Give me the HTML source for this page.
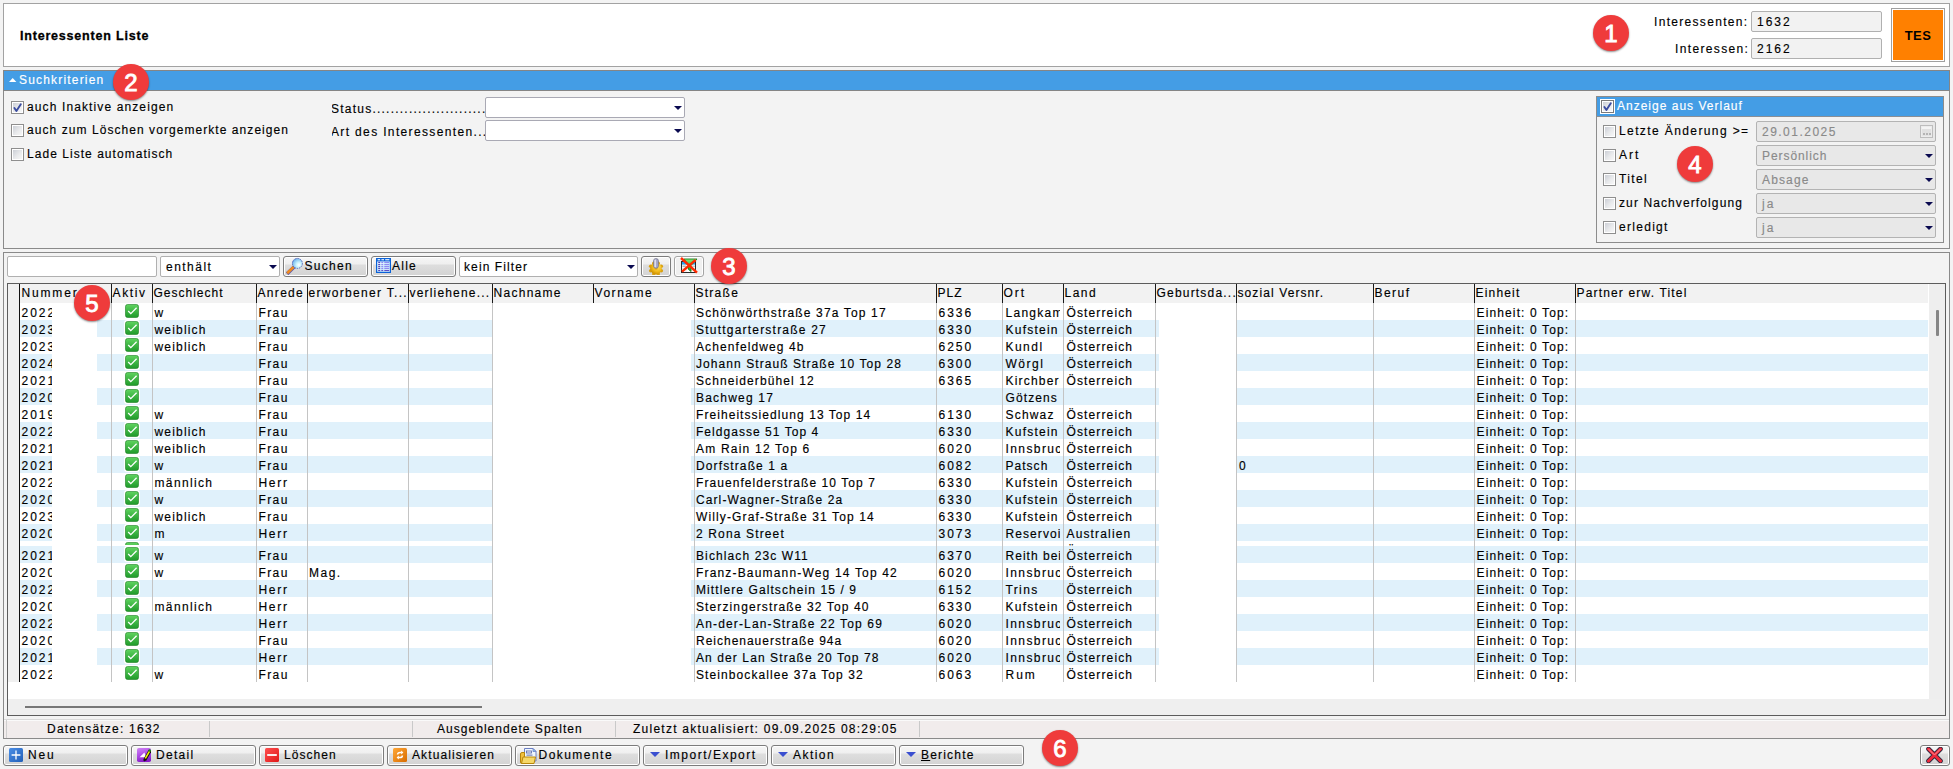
<!DOCTYPE html><html><head><meta charset="utf-8"><style>
html,body{margin:0;padding:0;}
body{width:1953px;height:769px;overflow:hidden;position:relative;background:#f3f3f3;font-family:"Liberation Sans",sans-serif;}
.a{position:absolute;box-sizing:border-box;}
.t{position:absolute;white-space:nowrap;font-size:12px;line-height:14px;letter-spacing:1.04px;color:#000;-webkit-text-stroke:0.15px currentColor;}
.badge{position:absolute;width:36px;height:36px;border-radius:50%;background:#ef3b3b;color:#fff;font:normal 24px/38px "Liberation Sans",sans-serif;-webkit-text-stroke:0.9px #fff;text-align:center;box-shadow:0 1px 2px rgba(0,0,0,0.45);z-index:50;}
.cb{position:absolute;box-sizing:border-box;border:1px solid #8e8e8e;background:linear-gradient(135deg,#c6cad2 0%,#e9eaec 55%,#fafafa 100%);box-shadow:inset 0 0 0 1px #fff;}
.btn{position:absolute;box-sizing:border-box;border:1px solid #7c7c7c;border-radius:3px;background:linear-gradient(#f6f6f6 0%,#efefef 38%,#dedede 41%,#d3d3d3 100%);box-shadow:inset 0 0 0 1px #fff;}
.cmb{position:absolute;box-sizing:border-box;border:1px solid #a9a9b4;border-radius:2px;background:#fff;}
.clip{position:absolute;overflow:hidden;white-space:nowrap;}
</style></head><body>

<div class="a" style="left:3px;top:3px;width:1947px;height:64px;border:1px solid #a2a2a2;background:#fff;"></div>
<div class="t" style="left:20px;top:29px;letter-spacing:1.103px;font-weight:bold;font-size:12.5px;letter-spacing:0.8px;-webkit-text-stroke:0.3px #000;">Interessenten Liste</div>
<div class="t" style="left:1654px;top:15px;letter-spacing:1.310px;">Interessenten:</div>
<div class="t" style="left:1675px;top:42px;letter-spacing:1.352px;">Interessen:</div>
<div class="a" style="left:1751px;top:11px;width:131px;height:21px;border:1px solid #b0b0b0;border-radius:2px;background:#f2f2f2;"></div>
<div class="a" style="left:1751px;top:38px;width:131px;height:21px;border:1px solid #b0b0b0;border-radius:2px;background:#f2f2f2;"></div>
<div class="t" style="left:1757px;top:15px;letter-spacing:1.986px;">1632</div>
<div class="t" style="left:1757px;top:42px;letter-spacing:1.986px;">2162</div>
<div class="a" style="left:1891px;top:8px;width:54px;height:54px;border:1px solid #a0a0a0;background:#fff;padding:1px;"></div>
<div class="a" style="left:1893px;top:10px;width:50px;height:50px;background:#ff8000;"></div>
<div class="a" style="left:1893px;top:10px;width:50px;height:50px;font:bold 13px/51px 'Liberation Sans';text-align:center;color:#000;letter-spacing:0.4px;">TES</div>
<div class="badge" style="left:1593.0px;top:14.5px;">1</div>
<div class="a" style="left:3px;top:70px;width:1947px;height:21px;border:1px solid #858585;background:#449de5;"></div>
<svg class="a" style="left:8px;top:77px;" width="10" height="6" viewBox="0 0 10 6"><polygon points="1,5 8.4,5 4.7,1" fill="#fff"/></svg>
<div class="t" style="left:19px;top:73px;letter-spacing:1.179px;color:#fff;">Suchkriterien</div>
<div class="badge" style="left:113.0px;top:64.0px;">2</div>
<div class="a" style="left:3px;top:91px;width:1947px;height:158px;border:1px solid #8a8a8a;border-top:none;background:#f3f3f3;"></div>
<div class="cb" style="left:11px;top:101px;width:13px;height:13px;"><svg width="11" height="11" viewBox="0 0 11 11" style="position:absolute;left:0px;top:0px"><path d="M2.4 6 L4.4 9 L8.8 2.2" stroke="#3a4ca0" stroke-width="1.9" fill="none" stroke-linecap="round" stroke-linejoin="round"/></svg></div>
<div class="cb" style="left:11px;top:124px;width:13px;height:13px;"></div>
<div class="cb" style="left:11px;top:148px;width:13px;height:13px;"></div>
<div class="t" style="left:27px;top:100px;letter-spacing:1.115px;">auch Inaktive anzeigen</div>
<div class="t" style="left:27px;top:123px;letter-spacing:1.061px;">auch zum Löschen vorgemerkte anzeigen</div>
<div class="t" style="left:27px;top:146.5px;letter-spacing:1.039px;">Lade Liste automatisch</div>
<div class="clip" style="left:332px;top:100px;width:153px;height:17px;"><div class="t" style="left:-1px;top:1.5px;letter-spacing:1.228px;">Status..............................</div></div>
<div class="clip" style="left:332px;top:120px;width:153px;height:20px;"><div class="t" style="left:-1px;top:5px;letter-spacing:1.352px;">Art des Interessenten...</div></div>
<div class="cmb" style="left:485px;top:97px;width:200px;height:21px;"></div>
<div class="a" style="left:673.5px;top:106px;width:0;height:0;border-left:4.0px solid transparent;border-right:4.0px solid transparent;border-top:4px solid #0a0a50;"></div>
<div class="cmb" style="left:485px;top:120px;width:200px;height:21px;"></div>
<div class="a" style="left:673.5px;top:129px;width:0;height:0;border-left:4.0px solid transparent;border-right:4.0px solid transparent;border-top:4px solid #0a0a50;"></div>
<div class="a" style="left:1596px;top:96px;width:348px;height:147px;border:1px solid #8c8c8c;background:#f3f3f3;"></div>
<div class="a" style="left:1597px;top:97px;width:346px;height:19px;background:#449de5;"></div>
<div class="a" style="left:1597px;top:116px;width:346px;height:1px;background:#8a8f96;"></div>
<div class="cb" style="left:1601px;top:100px;width:13px;height:13px;outline:1px solid #fff;border-color:#7a7a7a;"><svg width="11" height="11" viewBox="0 0 11 11" style="position:absolute;left:0px;top:0px"><path d="M2.4 6 L4.4 9 L8.8 2.2" stroke="#3a4ca0" stroke-width="1.9" fill="none" stroke-linecap="round" stroke-linejoin="round"/></svg></div>
<div class="t" style="left:1617px;top:99px;letter-spacing:1.005px;color:#fff;">Anzeige aus Verlauf</div>
<div class="cb" style="left:1603px;top:125px;width:13px;height:13px;"></div>
<div class="t" style="left:1619px;top:124px;letter-spacing:1.395px;">Letzte Änderung &gt;=</div>
<div class="a" style="left:1756px;top:121px;width:180px;height:21px;border:1px solid #b3b3b3;border-radius:2px;background:#e8e8e8;"></div>
<div class="t" style="left:1762px;top:125px;letter-spacing:1.479px;color:#8a8a8a;">29.01.2025</div>
<div class="a" style="left:1920px;top:125px;width:13px;height:13px;border:1px solid #bdbdbd;background:linear-gradient(#f4f4f4 0%,#f4f4f4 28%,#e0e0e0 30%,#e4e4e4 100%);box-shadow:inset 0 0 0 1px #ececec;"></div>
<div class="a" style="left:1923px;top:133px;width:2px;height:2px;background:#b4b4b4;"></div>
<div class="a" style="left:1926px;top:133px;width:2px;height:2px;background:#b4b4b4;"></div>
<div class="a" style="left:1929px;top:133px;width:2px;height:2px;background:#b4b4b4;"></div>
<div class="cb" style="left:1603px;top:149px;width:13px;height:13px;"></div>
<div class="t" style="left:1619px;top:148px;letter-spacing:2.000px;">Art</div>
<div class="a" style="left:1756px;top:145px;width:180px;height:21px;border:1px solid #b3b3b3;border-radius:2px;background:#e8e8e8;"></div>
<div class="t" style="left:1762px;top:149px;letter-spacing:0.933px;color:#8a8a8a;">Persönlich</div>
<div class="a" style="left:1924.5px;top:154px;width:0;height:0;border-left:4.0px solid transparent;border-right:4.0px solid transparent;border-top:4px solid #0a0a50;"></div>
<div class="cb" style="left:1603px;top:173px;width:13px;height:13px;"></div>
<div class="t" style="left:1619px;top:172px;letter-spacing:1.384px;">Titel</div>
<div class="a" style="left:1756px;top:169px;width:180px;height:21px;border:1px solid #b3b3b3;border-radius:2px;background:#e8e8e8;"></div>
<div class="t" style="left:1762px;top:173px;letter-spacing:1.140px;color:#8a8a8a;">Absage</div>
<div class="a" style="left:1924.5px;top:178px;width:0;height:0;border-left:4.0px solid transparent;border-right:4.0px solid transparent;border-top:4px solid #0a0a50;"></div>
<div class="cb" style="left:1603px;top:197px;width:13px;height:13px;"></div>
<div class="t" style="left:1619px;top:196px;letter-spacing:1.107px;">zur Nachverfolgung</div>
<div class="a" style="left:1756px;top:193px;width:180px;height:21px;border:1px solid #b3b3b3;border-radius:2px;background:#e8e8e8;"></div>
<div class="t" style="left:1762px;top:197px;letter-spacing:2.000px;color:#8a8a8a;">ja</div>
<div class="a" style="left:1924.5px;top:202px;width:0;height:0;border-left:4.0px solid transparent;border-right:4.0px solid transparent;border-top:4px solid #0a0a50;"></div>
<div class="cb" style="left:1603px;top:221px;width:13px;height:13px;"></div>
<div class="t" style="left:1619px;top:220px;letter-spacing:1.291px;">erledigt</div>
<div class="a" style="left:1756px;top:217px;width:180px;height:21px;border:1px solid #b3b3b3;border-radius:2px;background:#e8e8e8;"></div>
<div class="t" style="left:1762px;top:221px;letter-spacing:2.000px;color:#8a8a8a;">ja</div>
<div class="a" style="left:1924.5px;top:226px;width:0;height:0;border-left:4.0px solid transparent;border-right:4.0px solid transparent;border-top:4px solid #0a0a50;"></div>
<div class="badge" style="left:1677.0px;top:146.0px;">4</div>
<div class="a" style="left:3px;top:252px;width:1947px;height:487px;border:1px solid #8a8a8a;background:#f3f3f3;"></div>
<div class="cmb" style="left:7px;top:256px;width:150px;height:21px;border-color:#b0b0b0;"></div>
<div class="cmb" style="left:160px;top:256px;width:120px;height:21px;border-color:#b0b0b0;"></div>
<div class="t" style="left:166px;top:260px;letter-spacing:1.474px;">enthält</div>
<div class="a" style="left:268.5px;top:265px;width:0;height:0;border-left:4.0px solid transparent;border-right:4.0px solid transparent;border-top:4px solid #0a0a50;"></div>
<div class="btn" style="left:283px;top:256px;width:85px;height:21px;"></div>
<svg class="a" style="left:286px;top:257px;" width="18" height="18" viewBox="0 0 18 18"><defs><radialGradient id="gm" cx="0.65" cy="0.65" r="0.75"><stop offset="0" stop-color="#ffffff"/><stop offset="0.35" stop-color="#c8f2fc"/><stop offset="0.8" stop-color="#7fc0f0"/><stop offset="1" stop-color="#4f8fe0"/></radialGradient></defs><line x1="2.3" y1="15.6" x2="7" y2="11" stroke="#5a5ab0" stroke-width="3.6" stroke-linecap="square"/><line x1="2.1" y1="15.3" x2="6.8" y2="10.8" stroke="#f08a20" stroke-width="2.6" stroke-linecap="square"/><circle cx="11.4" cy="6.4" r="5" fill="url(#gm)" stroke="#4a58b0" stroke-width="0.9" stroke-dasharray="1.4 0.9"/></svg>
<div class="t" style="left:304.5px;top:259px;letter-spacing:1.270px;">Suchen</div>
<div class="btn" style="left:371px;top:256px;width:85px;height:21px;"></div>
<svg class="a" style="left:376px;top:258px;" width="15" height="15" viewBox="0 0 15 15"><defs><linearGradient id="gt" x1="0" y1="0" x2="1" y2="1"><stop offset="0" stop-color="#ffffff"/><stop offset="0.6" stop-color="#cdeefe"/><stop offset="1" stop-color="#f0faff"/></linearGradient></defs><rect x="0.6" y="0.6" width="13.8" height="13.8" fill="url(#gt)" stroke="#0a62d8" stroke-width="1.2"/><rect x="0" y="0" width="15" height="3.4" fill="#0a62d8"/><rect x="1.6" y="1.2" width="2.6" height="1.1" fill="#fff"/><rect x="5.4" y="1.2" width="2.6" height="1.1" fill="#fff"/><rect x="9.2" y="1.2" width="4.2" height="1.1" fill="#fff"/><rect x="2.2" y="3.8000000000000003" width="2" height="1.2" fill="#5048c0"/><rect x="5.3" y="3.8000000000000003" width="1.9" height="1.2" fill="#8e88f2"/><rect x="8.3" y="3.8000000000000003" width="4.9" height="1.2" fill="#8e88f2"/><rect x="2.2" y="5.9" width="2" height="1.2" fill="#5048c0"/><rect x="5.3" y="5.9" width="1.9" height="1.2" fill="#8e88f2"/><rect x="8.3" y="5.9" width="4.9" height="1.2" fill="#8e88f2"/><rect x="2.2" y="7.9" width="2" height="1.2" fill="#5048c0"/><rect x="5.3" y="7.9" width="1.9" height="1.2" fill="#8e88f2"/><rect x="8.3" y="7.9" width="4.9" height="1.2" fill="#8e88f2"/><rect x="2.2" y="9.8" width="2" height="1.2" fill="#5048c0"/><rect x="5.3" y="9.8" width="1.9" height="1.2" fill="#8e88f2"/><rect x="8.3" y="9.8" width="4.9" height="1.2" fill="#8e88f2"/><rect x="2.2" y="11.9" width="2" height="1.2" fill="#5048c0"/><rect x="5.3" y="11.9" width="1.9" height="1.2" fill="#5a50c8"/><rect x="8.3" y="11.9" width="4.9" height="1.2" fill="#5a50c8"/></svg>
<div class="t" style="left:392px;top:259px;letter-spacing:1.250px;">Alle</div>
<div class="cmb" style="left:459px;top:256px;width:179px;height:21px;border-color:#b0b0b0;"></div>
<div class="t" style="left:464px;top:260px;letter-spacing:1.105px;">kein Filter</div>
<div class="a" style="left:627px;top:265px;width:0;height:0;border-left:4.0px solid transparent;border-right:4.0px solid transparent;border-top:4px solid #0a0a50;"></div>
<div class="btn" style="left:641px;top:256px;width:30px;height:21px;"></div>
<svg class="a" style="left:648px;top:257.5px;" width="16" height="17" viewBox="0 0 16 17"><defs><radialGradient id="gg" cx="0.62" cy="0.35" r="0.7"><stop offset="0" stop-color="#ffe36a"/><stop offset="0.6" stop-color="#f0b818"/><stop offset="1" stop-color="#c88a00"/></radialGradient></defs><g fill="#d9a010"><circle cx="13.27" cy="12.68" r="1.8"/><circle cx="10.18" cy="15.77" r="1.8"/><circle cx="5.82" cy="15.77" r="1.8"/><circle cx="2.73" cy="12.68" r="1.8"/><circle cx="2.73" cy="8.32" r="1.8"/><circle cx="5.82" cy="5.23" r="1.8"/><circle cx="10.18" cy="5.23" r="1.8"/><circle cx="13.27" cy="8.32" r="1.8"/></g><circle cx="8" cy="10.5" r="5.8" fill="url(#gg)"/><circle cx="8" cy="10.5" r="1.6" fill="#e8b020"/><rect x="5.6" y="0.6" width="4.8" height="9.6" rx="2.2" fill="#a6a8cc" stroke="#6e6e80" stroke-width="0.7"/><rect x="6.5" y="1.6" width="1.4" height="7.6" fill="#e4e4f0"/></svg>
<div class="btn" style="left:674px;top:256px;width:30px;height:21px;border-color:#a4a4a4;background:#f0f0f0;"></div>
<svg class="a" style="left:680px;top:257px;" width="18" height="17" viewBox="0 0 18 17"><defs><linearGradient id="gf" x1="0" y1="0" x2="0" y2="1"><stop offset="0" stop-color="#7ee87e"/><stop offset="1" stop-color="#1e9a1e"/></linearGradient></defs><rect x="1.5" y="4.5" width="14" height="11" fill="#fff" stroke="#2a2a2a" stroke-width="1"/><rect x="2" y="5" width="13" height="2.6" fill="#22a2f0"/><rect x="2.5" y="8.5" width="3.5" height="1.6" fill="#b4b4b4"/><rect x="12" y="8.5" width="3" height="1.6" fill="#c8c8c8"/><path d="M2 11.5 H15 M6 8 V15 M11.5 8 V15" stroke="#d8d8d8" stroke-width="0.6"/><path d="M4 2 L17 2 L11 8.5 L11 14.5 L8.5 12.5 L8.5 8.5 Z" fill="url(#gf)" stroke="#0a7a0a" stroke-width="0.8"/><path d="M1 1 L17 15.7" stroke="#ff2a00" stroke-width="2.4"/><path d="M15.6 3 L2 14.6" stroke="#ff2a00" stroke-width="2.4"/></svg>
<div class="badge" style="left:711.0px;top:247.5px;">3</div>
<div class="a" style="left:7px;top:283px;width:1939px;height:433px;border:1px solid #5c5c5c;background:#fff;"></div>
<div class="a" style="left:8px;top:284px;width:12px;height:398px;background:#f0f0f0;"></div>
<div class="a" style="left:19px;top:284px;width:1px;height:398px;background:#111;"></div>
<div class="a" style="left:20px;top:284px;width:1908px;height:19px;background:#f2f2f2;"></div>
<div class="t" style="left:21.5px;top:286px;letter-spacing:1.825px;">Nummer</div>
<div class="t" style="left:112.5px;top:286px;letter-spacing:1.628px;">Aktiv</div>
<div class="t" style="left:153.5px;top:286px;letter-spacing:0.999px;">Geschlecht</div>
<div class="t" style="left:257.5px;top:286px;letter-spacing:1.319px;">Anrede</div>
<div class="t" style="left:308.5px;top:286px;letter-spacing:1.306px;">erworbener T...</div>
<div class="t" style="left:409.5px;top:286px;letter-spacing:1.177px;">verliehene...</div>
<div class="t" style="left:493.5px;top:286px;letter-spacing:1.285px;">Nachname</div>
<div class="t" style="left:594.5px;top:286px;letter-spacing:1.538px;">Vorname</div>
<div class="t" style="left:695.5px;top:286px;letter-spacing:1.258px;">Straße</div>
<div class="t" style="left:937.5px;top:286px;letter-spacing:1.070px;">PLZ</div>
<div class="t" style="left:1003.5px;top:286px;letter-spacing:2.000px;">Ort</div>
<div class="t" style="left:1064.5px;top:286px;letter-spacing:1.475px;">Land</div>
<div class="t" style="left:1156.5px;top:286px;letter-spacing:1.198px;">Geburtsda...</div>
<div class="t" style="left:1237.5px;top:286px;letter-spacing:1.097px;">sozial Versnr.</div>
<div class="t" style="left:1374.5px;top:286px;letter-spacing:1.460px;">Beruf</div>
<div class="t" style="left:1475.5px;top:286px;letter-spacing:1.179px;">Einheit</div>
<div class="t" style="left:1576.5px;top:286px;letter-spacing:1.163px;">Partner erw. Titel</div>
<div class="a" style="left:111px;top:284px;width:1px;height:19px;background:#1a1a1a;"></div>
<div class="a" style="left:152px;top:284px;width:1px;height:19px;background:#1a1a1a;"></div>
<div class="a" style="left:256px;top:284px;width:1px;height:19px;background:#1a1a1a;"></div>
<div class="a" style="left:307px;top:284px;width:1px;height:19px;background:#1a1a1a;"></div>
<div class="a" style="left:408px;top:284px;width:1px;height:19px;background:#1a1a1a;"></div>
<div class="a" style="left:492px;top:284px;width:1px;height:19px;background:#1a1a1a;"></div>
<div class="a" style="left:593px;top:284px;width:1px;height:19px;background:#1a1a1a;"></div>
<div class="a" style="left:694px;top:284px;width:1px;height:19px;background:#1a1a1a;"></div>
<div class="a" style="left:936px;top:284px;width:1px;height:19px;background:#1a1a1a;"></div>
<div class="a" style="left:1002px;top:284px;width:1px;height:19px;background:#1a1a1a;"></div>
<div class="a" style="left:1063px;top:284px;width:1px;height:19px;background:#1a1a1a;"></div>
<div class="a" style="left:1155px;top:284px;width:1px;height:19px;background:#1a1a1a;"></div>
<div class="a" style="left:1236px;top:284px;width:1px;height:19px;background:#1a1a1a;"></div>
<div class="a" style="left:1373px;top:284px;width:1px;height:19px;background:#1a1a1a;"></div>
<div class="a" style="left:1474px;top:284px;width:1px;height:19px;background:#1a1a1a;"></div>
<div class="a" style="left:1575px;top:284px;width:1px;height:19px;background:#1a1a1a;"></div>
<div class="a" style="left:20px;top:320px;width:32px;height:17px;background:#e0f1fb;"></div>
<div class="a" style="left:97px;top:320px;width:396px;height:17px;background:#e0f1fb;"></div>
<div class="a" style="left:691px;top:320px;width:468px;height:17px;background:#e0f1fb;"></div>
<div class="a" style="left:1236px;top:320px;width:692px;height:17px;background:#e0f1fb;"></div>
<div class="a" style="left:20px;top:354px;width:32px;height:17px;background:#e0f1fb;"></div>
<div class="a" style="left:97px;top:354px;width:396px;height:17px;background:#e0f1fb;"></div>
<div class="a" style="left:691px;top:354px;width:468px;height:17px;background:#e0f1fb;"></div>
<div class="a" style="left:1236px;top:354px;width:692px;height:17px;background:#e0f1fb;"></div>
<div class="a" style="left:20px;top:388px;width:32px;height:17px;background:#e0f1fb;"></div>
<div class="a" style="left:97px;top:388px;width:396px;height:17px;background:#e0f1fb;"></div>
<div class="a" style="left:691px;top:388px;width:468px;height:17px;background:#e0f1fb;"></div>
<div class="a" style="left:1236px;top:388px;width:692px;height:17px;background:#e0f1fb;"></div>
<div class="a" style="left:20px;top:422px;width:32px;height:17px;background:#e0f1fb;"></div>
<div class="a" style="left:97px;top:422px;width:396px;height:17px;background:#e0f1fb;"></div>
<div class="a" style="left:691px;top:422px;width:468px;height:17px;background:#e0f1fb;"></div>
<div class="a" style="left:1236px;top:422px;width:692px;height:17px;background:#e0f1fb;"></div>
<div class="a" style="left:20px;top:456px;width:32px;height:17px;background:#e0f1fb;"></div>
<div class="a" style="left:97px;top:456px;width:396px;height:17px;background:#e0f1fb;"></div>
<div class="a" style="left:691px;top:456px;width:468px;height:17px;background:#e0f1fb;"></div>
<div class="a" style="left:1236px;top:456px;width:692px;height:17px;background:#e0f1fb;"></div>
<div class="a" style="left:20px;top:490px;width:32px;height:17px;background:#e0f1fb;"></div>
<div class="a" style="left:97px;top:490px;width:396px;height:17px;background:#e0f1fb;"></div>
<div class="a" style="left:691px;top:490px;width:468px;height:17px;background:#e0f1fb;"></div>
<div class="a" style="left:1236px;top:490px;width:692px;height:17px;background:#e0f1fb;"></div>
<div class="a" style="left:20px;top:524px;width:32px;height:17px;background:#e0f1fb;"></div>
<div class="a" style="left:97px;top:524px;width:396px;height:17px;background:#e0f1fb;"></div>
<div class="a" style="left:691px;top:524px;width:468px;height:17px;background:#e0f1fb;"></div>
<div class="a" style="left:1236px;top:524px;width:692px;height:17px;background:#e0f1fb;"></div>
<div class="a" style="left:20px;top:546px;width:32px;height:17px;background:#e0f1fb;"></div>
<div class="a" style="left:97px;top:546px;width:396px;height:17px;background:#e0f1fb;"></div>
<div class="a" style="left:691px;top:546px;width:468px;height:17px;background:#e0f1fb;"></div>
<div class="a" style="left:1236px;top:546px;width:692px;height:17px;background:#e0f1fb;"></div>
<div class="a" style="left:20px;top:580px;width:32px;height:17px;background:#e0f1fb;"></div>
<div class="a" style="left:97px;top:580px;width:396px;height:17px;background:#e0f1fb;"></div>
<div class="a" style="left:691px;top:580px;width:468px;height:17px;background:#e0f1fb;"></div>
<div class="a" style="left:1236px;top:580px;width:692px;height:17px;background:#e0f1fb;"></div>
<div class="a" style="left:20px;top:614px;width:32px;height:17px;background:#e0f1fb;"></div>
<div class="a" style="left:97px;top:614px;width:396px;height:17px;background:#e0f1fb;"></div>
<div class="a" style="left:691px;top:614px;width:468px;height:17px;background:#e0f1fb;"></div>
<div class="a" style="left:1236px;top:614px;width:692px;height:17px;background:#e0f1fb;"></div>
<div class="a" style="left:20px;top:648px;width:32px;height:17px;background:#e0f1fb;"></div>
<div class="a" style="left:97px;top:648px;width:396px;height:17px;background:#e0f1fb;"></div>
<div class="a" style="left:691px;top:648px;width:468px;height:17px;background:#e0f1fb;"></div>
<div class="a" style="left:1236px;top:648px;width:692px;height:17px;background:#e0f1fb;"></div>
<div class="clip" style="left:125px;top:542px;width:14px;height:3px;"><svg width="14" height="14" viewBox="0 0 14 14"><defs><linearGradient id="g" x1="0" y1="0" x2="0" y2="1"><stop offset="0" stop-color="#5fd35f"/><stop offset="1" stop-color="#1f9a2a"/></linearGradient></defs><rect x="0.5" y="0.5" width="13" height="13" rx="2" fill="url(#g)" stroke="#1b7f22" stroke-width="0.6"/><path d="M3.2 7 L5.8 9.6 L11.6 3.8" stroke="#fff" stroke-width="1.3" fill="none"/></svg></div>
<div class="clip" style="left:1066px;top:541px;width:60px;height:5px;"><div class="t" style="left:0.5px;top:3px;letter-spacing:1.125px;">Österreich</div></div>
<div class="clip" style="left:20px;top:303px;width:32px;height:17px;"><div class="t" style="left:1.5px;top:3px;letter-spacing:1.986px;">2022</div></div>
<div class="a" style="left:124px;top:303px;width:16px;height:16px;background:#fff;border-radius:3px;padding:1px;"><svg width="14" height="14" viewBox="0 0 14 14"><defs><linearGradient id="g" x1="0" y1="0" x2="0" y2="1"><stop offset="0" stop-color="#5fd35f"/><stop offset="1" stop-color="#1f9a2a"/></linearGradient></defs><rect x="0.5" y="0.5" width="13" height="13" rx="2" fill="url(#g)" stroke="#1b7f22" stroke-width="0.6"/><path d="M3.2 7 L5.8 9.6 L11.6 3.8" stroke="#fff" stroke-width="1.3" fill="none"/></svg></div>
<div class="t" style="left:154.5px;top:306px;letter-spacing:1.040px;">w</div>
<div class="t" style="left:258.5px;top:306px;letter-spacing:1.379px;">Frau</div>
<div class="t" style="left:696px;top:306px;letter-spacing:1.142px;">Schönwörthstraße 37a Top 17</div>
<div class="t" style="left:938.5px;top:306px;letter-spacing:1.986px;">6336</div>
<div class="clip" style="left:1003px;top:303px;width:57px;height:17px;"><div class="t" style="left:2.5px;top:3px;letter-spacing:1.275px;">Langkampfen</div></div>
<div class="t" style="left:1066.5px;top:306px;letter-spacing:1.125px;">Österreich</div>
<div class="t" style="left:1476.5px;top:306px;letter-spacing:1.130px;">Einheit: 0 Top:</div>
<div class="clip" style="left:20px;top:320px;width:32px;height:17px;"><div class="t" style="left:1.5px;top:3px;letter-spacing:1.986px;">2023</div></div>
<div class="a" style="left:124px;top:320px;width:16px;height:16px;background:#fff;border-radius:3px;padding:1px;"><svg width="14" height="14" viewBox="0 0 14 14"><defs><linearGradient id="g" x1="0" y1="0" x2="0" y2="1"><stop offset="0" stop-color="#5fd35f"/><stop offset="1" stop-color="#1f9a2a"/></linearGradient></defs><rect x="0.5" y="0.5" width="13" height="13" rx="2" fill="url(#g)" stroke="#1b7f22" stroke-width="0.6"/><path d="M3.2 7 L5.8 9.6 L11.6 3.8" stroke="#fff" stroke-width="1.3" fill="none"/></svg></div>
<div class="t" style="left:154.5px;top:323px;letter-spacing:1.179px;">weiblich</div>
<div class="t" style="left:258.5px;top:323px;letter-spacing:1.379px;">Frau</div>
<div class="t" style="left:696px;top:323px;letter-spacing:1.213px;">Stuttgarterstraße 27</div>
<div class="t" style="left:938.5px;top:323px;letter-spacing:1.986px;">6330</div>
<div class="clip" style="left:1003px;top:320px;width:57px;height:17px;"><div class="t" style="left:2.5px;top:3px;letter-spacing:1.236px;">Kufstein</div></div>
<div class="t" style="left:1066.5px;top:323px;letter-spacing:1.125px;">Österreich</div>
<div class="t" style="left:1476.5px;top:323px;letter-spacing:1.130px;">Einheit: 0 Top:</div>
<div class="clip" style="left:20px;top:337px;width:32px;height:17px;"><div class="t" style="left:1.5px;top:3px;letter-spacing:1.986px;">2023</div></div>
<div class="a" style="left:124px;top:337px;width:16px;height:16px;background:#fff;border-radius:3px;padding:1px;"><svg width="14" height="14" viewBox="0 0 14 14"><defs><linearGradient id="g" x1="0" y1="0" x2="0" y2="1"><stop offset="0" stop-color="#5fd35f"/><stop offset="1" stop-color="#1f9a2a"/></linearGradient></defs><rect x="0.5" y="0.5" width="13" height="13" rx="2" fill="url(#g)" stroke="#1b7f22" stroke-width="0.6"/><path d="M3.2 7 L5.8 9.6 L11.6 3.8" stroke="#fff" stroke-width="1.3" fill="none"/></svg></div>
<div class="t" style="left:154.5px;top:340px;letter-spacing:1.179px;">weiblich</div>
<div class="t" style="left:258.5px;top:340px;letter-spacing:1.379px;">Frau</div>
<div class="t" style="left:696px;top:340px;letter-spacing:1.103px;">Achenfeldweg 4b</div>
<div class="t" style="left:938.5px;top:340px;letter-spacing:1.986px;">6250</div>
<div class="clip" style="left:1003px;top:337px;width:57px;height:17px;"><div class="t" style="left:2.5px;top:3px;letter-spacing:1.469px;">Kundl</div></div>
<div class="t" style="left:1066.5px;top:340px;letter-spacing:1.125px;">Österreich</div>
<div class="t" style="left:1476.5px;top:340px;letter-spacing:1.130px;">Einheit: 0 Top:</div>
<div class="clip" style="left:20px;top:354px;width:32px;height:17px;"><div class="t" style="left:1.5px;top:3px;letter-spacing:1.986px;">2024</div></div>
<div class="a" style="left:124px;top:354px;width:16px;height:16px;background:#fff;border-radius:3px;padding:1px;"><svg width="14" height="14" viewBox="0 0 14 14"><defs><linearGradient id="g" x1="0" y1="0" x2="0" y2="1"><stop offset="0" stop-color="#5fd35f"/><stop offset="1" stop-color="#1f9a2a"/></linearGradient></defs><rect x="0.5" y="0.5" width="13" height="13" rx="2" fill="url(#g)" stroke="#1b7f22" stroke-width="0.6"/><path d="M3.2 7 L5.8 9.6 L11.6 3.8" stroke="#fff" stroke-width="1.3" fill="none"/></svg></div>
<div class="t" style="left:258.5px;top:357px;letter-spacing:1.379px;">Frau</div>
<div class="t" style="left:696px;top:357px;letter-spacing:1.066px;">Johann Strauß Straße 10 Top 28</div>
<div class="t" style="left:938.5px;top:357px;letter-spacing:1.986px;">6300</div>
<div class="clip" style="left:1003px;top:354px;width:57px;height:17px;"><div class="t" style="left:2.5px;top:3px;letter-spacing:1.501px;">Wörgl</div></div>
<div class="t" style="left:1066.5px;top:357px;letter-spacing:1.125px;">Österreich</div>
<div class="t" style="left:1476.5px;top:357px;letter-spacing:1.130px;">Einheit: 0 Top:</div>
<div class="clip" style="left:20px;top:371px;width:32px;height:17px;"><div class="t" style="left:1.5px;top:3px;letter-spacing:1.986px;">2021</div></div>
<div class="a" style="left:124px;top:371px;width:16px;height:16px;background:#fff;border-radius:3px;padding:1px;"><svg width="14" height="14" viewBox="0 0 14 14"><defs><linearGradient id="g" x1="0" y1="0" x2="0" y2="1"><stop offset="0" stop-color="#5fd35f"/><stop offset="1" stop-color="#1f9a2a"/></linearGradient></defs><rect x="0.5" y="0.5" width="13" height="13" rx="2" fill="url(#g)" stroke="#1b7f22" stroke-width="0.6"/><path d="M3.2 7 L5.8 9.6 L11.6 3.8" stroke="#fff" stroke-width="1.3" fill="none"/></svg></div>
<div class="t" style="left:258.5px;top:374px;letter-spacing:1.379px;">Frau</div>
<div class="t" style="left:696px;top:374px;letter-spacing:1.097px;">Schneiderbühel 12</div>
<div class="t" style="left:938.5px;top:374px;letter-spacing:1.986px;">6365</div>
<div class="clip" style="left:1003px;top:371px;width:57px;height:17px;"><div class="t" style="left:2.5px;top:3px;letter-spacing:1.204px;">Kirchberg</div></div>
<div class="t" style="left:1066.5px;top:374px;letter-spacing:1.125px;">Österreich</div>
<div class="t" style="left:1476.5px;top:374px;letter-spacing:1.130px;">Einheit: 0 Top:</div>
<div class="clip" style="left:20px;top:388px;width:32px;height:17px;"><div class="t" style="left:1.5px;top:3px;letter-spacing:1.986px;">2020</div></div>
<div class="a" style="left:124px;top:388px;width:16px;height:16px;background:#fff;border-radius:3px;padding:1px;"><svg width="14" height="14" viewBox="0 0 14 14"><defs><linearGradient id="g" x1="0" y1="0" x2="0" y2="1"><stop offset="0" stop-color="#5fd35f"/><stop offset="1" stop-color="#1f9a2a"/></linearGradient></defs><rect x="0.5" y="0.5" width="13" height="13" rx="2" fill="url(#g)" stroke="#1b7f22" stroke-width="0.6"/><path d="M3.2 7 L5.8 9.6 L11.6 3.8" stroke="#fff" stroke-width="1.3" fill="none"/></svg></div>
<div class="t" style="left:258.5px;top:391px;letter-spacing:1.379px;">Frau</div>
<div class="t" style="left:696px;top:391px;letter-spacing:1.207px;">Bachweg 17</div>
<div class="clip" style="left:1003px;top:388px;width:57px;height:17px;"><div class="t" style="left:2.5px;top:3px;letter-spacing:1.108px;">Götzens</div></div>
<div class="t" style="left:1476.5px;top:391px;letter-spacing:1.130px;">Einheit: 0 Top:</div>
<div class="clip" style="left:20px;top:405px;width:32px;height:17px;"><div class="t" style="left:1.5px;top:3px;letter-spacing:1.986px;">2019</div></div>
<div class="a" style="left:124px;top:405px;width:16px;height:16px;background:#fff;border-radius:3px;padding:1px;"><svg width="14" height="14" viewBox="0 0 14 14"><defs><linearGradient id="g" x1="0" y1="0" x2="0" y2="1"><stop offset="0" stop-color="#5fd35f"/><stop offset="1" stop-color="#1f9a2a"/></linearGradient></defs><rect x="0.5" y="0.5" width="13" height="13" rx="2" fill="url(#g)" stroke="#1b7f22" stroke-width="0.6"/><path d="M3.2 7 L5.8 9.6 L11.6 3.8" stroke="#fff" stroke-width="1.3" fill="none"/></svg></div>
<div class="t" style="left:154.5px;top:408px;letter-spacing:1.040px;">w</div>
<div class="t" style="left:258.5px;top:408px;letter-spacing:1.379px;">Frau</div>
<div class="t" style="left:696px;top:408px;letter-spacing:1.061px;">Freiheitssiedlung 13 Top 14</div>
<div class="t" style="left:938.5px;top:408px;letter-spacing:1.986px;">6130</div>
<div class="clip" style="left:1003px;top:405px;width:57px;height:17px;"><div class="t" style="left:2.5px;top:3px;letter-spacing:1.187px;">Schwaz</div></div>
<div class="t" style="left:1066.5px;top:408px;letter-spacing:1.125px;">Österreich</div>
<div class="t" style="left:1476.5px;top:408px;letter-spacing:1.130px;">Einheit: 0 Top:</div>
<div class="clip" style="left:20px;top:422px;width:32px;height:17px;"><div class="t" style="left:1.5px;top:3px;letter-spacing:1.986px;">2022</div></div>
<div class="a" style="left:124px;top:422px;width:16px;height:16px;background:#fff;border-radius:3px;padding:1px;"><svg width="14" height="14" viewBox="0 0 14 14"><defs><linearGradient id="g" x1="0" y1="0" x2="0" y2="1"><stop offset="0" stop-color="#5fd35f"/><stop offset="1" stop-color="#1f9a2a"/></linearGradient></defs><rect x="0.5" y="0.5" width="13" height="13" rx="2" fill="url(#g)" stroke="#1b7f22" stroke-width="0.6"/><path d="M3.2 7 L5.8 9.6 L11.6 3.8" stroke="#fff" stroke-width="1.3" fill="none"/></svg></div>
<div class="t" style="left:154.5px;top:425px;letter-spacing:1.179px;">weiblich</div>
<div class="t" style="left:258.5px;top:425px;letter-spacing:1.379px;">Frau</div>
<div class="t" style="left:696px;top:425px;letter-spacing:1.038px;">Feldgasse 51 Top 4</div>
<div class="t" style="left:938.5px;top:425px;letter-spacing:1.986px;">6330</div>
<div class="clip" style="left:1003px;top:422px;width:57px;height:17px;"><div class="t" style="left:2.5px;top:3px;letter-spacing:1.236px;">Kufstein</div></div>
<div class="t" style="left:1066.5px;top:425px;letter-spacing:1.125px;">Österreich</div>
<div class="t" style="left:1476.5px;top:425px;letter-spacing:1.130px;">Einheit: 0 Top:</div>
<div class="clip" style="left:20px;top:439px;width:32px;height:17px;"><div class="t" style="left:1.5px;top:3px;letter-spacing:1.986px;">2021</div></div>
<div class="a" style="left:124px;top:439px;width:16px;height:16px;background:#fff;border-radius:3px;padding:1px;"><svg width="14" height="14" viewBox="0 0 14 14"><defs><linearGradient id="g" x1="0" y1="0" x2="0" y2="1"><stop offset="0" stop-color="#5fd35f"/><stop offset="1" stop-color="#1f9a2a"/></linearGradient></defs><rect x="0.5" y="0.5" width="13" height="13" rx="2" fill="url(#g)" stroke="#1b7f22" stroke-width="0.6"/><path d="M3.2 7 L5.8 9.6 L11.6 3.8" stroke="#fff" stroke-width="1.3" fill="none"/></svg></div>
<div class="t" style="left:154.5px;top:442px;letter-spacing:1.179px;">weiblich</div>
<div class="t" style="left:258.5px;top:442px;letter-spacing:1.379px;">Frau</div>
<div class="t" style="left:696px;top:442px;letter-spacing:1.206px;">Am Rain 12 Top 6</div>
<div class="t" style="left:938.5px;top:442px;letter-spacing:1.986px;">6020</div>
<div class="clip" style="left:1003px;top:439px;width:57px;height:17px;"><div class="t" style="left:2.5px;top:3px;letter-spacing:1.404px;">Innsbruck</div></div>
<div class="t" style="left:1066.5px;top:442px;letter-spacing:1.125px;">Österreich</div>
<div class="t" style="left:1476.5px;top:442px;letter-spacing:1.130px;">Einheit: 0 Top:</div>
<div class="clip" style="left:20px;top:456px;width:32px;height:17px;"><div class="t" style="left:1.5px;top:3px;letter-spacing:1.986px;">2021</div></div>
<div class="a" style="left:124px;top:456px;width:16px;height:16px;background:#fff;border-radius:3px;padding:1px;"><svg width="14" height="14" viewBox="0 0 14 14"><defs><linearGradient id="g" x1="0" y1="0" x2="0" y2="1"><stop offset="0" stop-color="#5fd35f"/><stop offset="1" stop-color="#1f9a2a"/></linearGradient></defs><rect x="0.5" y="0.5" width="13" height="13" rx="2" fill="url(#g)" stroke="#1b7f22" stroke-width="0.6"/><path d="M3.2 7 L5.8 9.6 L11.6 3.8" stroke="#fff" stroke-width="1.3" fill="none"/></svg></div>
<div class="t" style="left:154.5px;top:459px;letter-spacing:1.040px;">w</div>
<div class="t" style="left:258.5px;top:459px;letter-spacing:1.379px;">Frau</div>
<div class="t" style="left:696px;top:459px;letter-spacing:1.119px;">Dorfstraße 1 a</div>
<div class="t" style="left:938.5px;top:459px;letter-spacing:1.986px;">6082</div>
<div class="clip" style="left:1003px;top:456px;width:57px;height:17px;"><div class="t" style="left:2.5px;top:3px;letter-spacing:1.024px;">Patsch</div></div>
<div class="t" style="left:1066.5px;top:459px;letter-spacing:1.125px;">Österreich</div>
<div class="t" style="left:1239px;top:459px;letter-spacing:1.040px;">0</div>
<div class="t" style="left:1476.5px;top:459px;letter-spacing:1.130px;">Einheit: 0 Top:</div>
<div class="clip" style="left:20px;top:473px;width:32px;height:17px;"><div class="t" style="left:1.5px;top:3px;letter-spacing:1.986px;">2022</div></div>
<div class="a" style="left:124px;top:473px;width:16px;height:16px;background:#fff;border-radius:3px;padding:1px;"><svg width="14" height="14" viewBox="0 0 14 14"><defs><linearGradient id="g" x1="0" y1="0" x2="0" y2="1"><stop offset="0" stop-color="#5fd35f"/><stop offset="1" stop-color="#1f9a2a"/></linearGradient></defs><rect x="0.5" y="0.5" width="13" height="13" rx="2" fill="url(#g)" stroke="#1b7f22" stroke-width="0.6"/><path d="M3.2 7 L5.8 9.6 L11.6 3.8" stroke="#fff" stroke-width="1.3" fill="none"/></svg></div>
<div class="t" style="left:154.5px;top:476px;letter-spacing:1.358px;">männlich</div>
<div class="t" style="left:258.5px;top:476px;letter-spacing:1.687px;">Herr</div>
<div class="t" style="left:696px;top:476px;letter-spacing:1.065px;">Frauenfelderstraße 10 Top 7</div>
<div class="t" style="left:938.5px;top:476px;letter-spacing:1.986px;">6330</div>
<div class="clip" style="left:1003px;top:473px;width:57px;height:17px;"><div class="t" style="left:2.5px;top:3px;letter-spacing:1.236px;">Kufstein</div></div>
<div class="t" style="left:1066.5px;top:476px;letter-spacing:1.125px;">Österreich</div>
<div class="t" style="left:1476.5px;top:476px;letter-spacing:1.130px;">Einheit: 0 Top:</div>
<div class="clip" style="left:20px;top:490px;width:32px;height:17px;"><div class="t" style="left:1.5px;top:3px;letter-spacing:1.986px;">2020</div></div>
<div class="a" style="left:124px;top:490px;width:16px;height:16px;background:#fff;border-radius:3px;padding:1px;"><svg width="14" height="14" viewBox="0 0 14 14"><defs><linearGradient id="g" x1="0" y1="0" x2="0" y2="1"><stop offset="0" stop-color="#5fd35f"/><stop offset="1" stop-color="#1f9a2a"/></linearGradient></defs><rect x="0.5" y="0.5" width="13" height="13" rx="2" fill="url(#g)" stroke="#1b7f22" stroke-width="0.6"/><path d="M3.2 7 L5.8 9.6 L11.6 3.8" stroke="#fff" stroke-width="1.3" fill="none"/></svg></div>
<div class="t" style="left:154.5px;top:493px;letter-spacing:1.040px;">w</div>
<div class="t" style="left:258.5px;top:493px;letter-spacing:1.379px;">Frau</div>
<div class="t" style="left:696px;top:493px;letter-spacing:1.095px;">Carl-Wagner-Straße 2a</div>
<div class="t" style="left:938.5px;top:493px;letter-spacing:1.986px;">6330</div>
<div class="clip" style="left:1003px;top:490px;width:57px;height:17px;"><div class="t" style="left:2.5px;top:3px;letter-spacing:1.236px;">Kufstein</div></div>
<div class="t" style="left:1066.5px;top:493px;letter-spacing:1.125px;">Österreich</div>
<div class="t" style="left:1476.5px;top:493px;letter-spacing:1.130px;">Einheit: 0 Top:</div>
<div class="clip" style="left:20px;top:507px;width:32px;height:17px;"><div class="t" style="left:1.5px;top:3px;letter-spacing:1.986px;">2023</div></div>
<div class="a" style="left:124px;top:507px;width:16px;height:16px;background:#fff;border-radius:3px;padding:1px;"><svg width="14" height="14" viewBox="0 0 14 14"><defs><linearGradient id="g" x1="0" y1="0" x2="0" y2="1"><stop offset="0" stop-color="#5fd35f"/><stop offset="1" stop-color="#1f9a2a"/></linearGradient></defs><rect x="0.5" y="0.5" width="13" height="13" rx="2" fill="url(#g)" stroke="#1b7f22" stroke-width="0.6"/><path d="M3.2 7 L5.8 9.6 L11.6 3.8" stroke="#fff" stroke-width="1.3" fill="none"/></svg></div>
<div class="t" style="left:154.5px;top:510px;letter-spacing:1.179px;">weiblich</div>
<div class="t" style="left:258.5px;top:510px;letter-spacing:1.379px;">Frau</div>
<div class="t" style="left:696px;top:510px;letter-spacing:1.126px;">Willy-Graf-Straße 31 Top 14</div>
<div class="t" style="left:938.5px;top:510px;letter-spacing:1.986px;">6330</div>
<div class="clip" style="left:1003px;top:507px;width:57px;height:17px;"><div class="t" style="left:2.5px;top:3px;letter-spacing:1.236px;">Kufstein</div></div>
<div class="t" style="left:1066.5px;top:510px;letter-spacing:1.125px;">Österreich</div>
<div class="t" style="left:1476.5px;top:510px;letter-spacing:1.130px;">Einheit: 0 Top:</div>
<div class="clip" style="left:20px;top:524px;width:32px;height:17px;"><div class="t" style="left:1.5px;top:3px;letter-spacing:1.986px;">2020</div></div>
<div class="a" style="left:124px;top:524px;width:16px;height:16px;background:#fff;border-radius:3px;padding:1px;"><svg width="14" height="14" viewBox="0 0 14 14"><defs><linearGradient id="g" x1="0" y1="0" x2="0" y2="1"><stop offset="0" stop-color="#5fd35f"/><stop offset="1" stop-color="#1f9a2a"/></linearGradient></defs><rect x="0.5" y="0.5" width="13" height="13" rx="2" fill="url(#g)" stroke="#1b7f22" stroke-width="0.6"/><path d="M3.2 7 L5.8 9.6 L11.6 3.8" stroke="#fff" stroke-width="1.3" fill="none"/></svg></div>
<div class="t" style="left:154.5px;top:527px;letter-spacing:1.040px;">m</div>
<div class="t" style="left:258.5px;top:527px;letter-spacing:1.687px;">Herr</div>
<div class="t" style="left:696px;top:527px;letter-spacing:1.141px;">2 Rona Street</div>
<div class="t" style="left:938.5px;top:527px;letter-spacing:1.986px;">3073</div>
<div class="clip" style="left:1003px;top:524px;width:57px;height:17px;"><div class="t" style="left:2.5px;top:3px;letter-spacing:1.074px;">Reservoir</div></div>
<div class="t" style="left:1066.5px;top:527px;letter-spacing:1.147px;">Australien</div>
<div class="t" style="left:1476.5px;top:527px;letter-spacing:1.130px;">Einheit: 0 Top:</div>
<div class="clip" style="left:20px;top:546px;width:32px;height:17px;"><div class="t" style="left:1.5px;top:3px;letter-spacing:1.986px;">2021</div></div>
<div class="a" style="left:124px;top:546px;width:16px;height:16px;background:#fff;border-radius:3px;padding:1px;"><svg width="14" height="14" viewBox="0 0 14 14"><defs><linearGradient id="g" x1="0" y1="0" x2="0" y2="1"><stop offset="0" stop-color="#5fd35f"/><stop offset="1" stop-color="#1f9a2a"/></linearGradient></defs><rect x="0.5" y="0.5" width="13" height="13" rx="2" fill="url(#g)" stroke="#1b7f22" stroke-width="0.6"/><path d="M3.2 7 L5.8 9.6 L11.6 3.8" stroke="#fff" stroke-width="1.3" fill="none"/></svg></div>
<div class="t" style="left:154.5px;top:549px;letter-spacing:1.040px;">w</div>
<div class="t" style="left:258.5px;top:549px;letter-spacing:1.379px;">Frau</div>
<div class="t" style="left:696px;top:549px;letter-spacing:1.108px;">Bichlach 23c W11</div>
<div class="t" style="left:938.5px;top:549px;letter-spacing:1.986px;">6370</div>
<div class="clip" style="left:1003px;top:546px;width:57px;height:17px;"><div class="t" style="left:2.5px;top:3px;letter-spacing:1.021px;">Reith bei Kitzbühel</div></div>
<div class="t" style="left:1066.5px;top:549px;letter-spacing:1.125px;">Österreich</div>
<div class="t" style="left:1476.5px;top:549px;letter-spacing:1.130px;">Einheit: 0 Top:</div>
<div class="clip" style="left:20px;top:563px;width:32px;height:17px;"><div class="t" style="left:1.5px;top:3px;letter-spacing:1.986px;">2020</div></div>
<div class="a" style="left:124px;top:563px;width:16px;height:16px;background:#fff;border-radius:3px;padding:1px;"><svg width="14" height="14" viewBox="0 0 14 14"><defs><linearGradient id="g" x1="0" y1="0" x2="0" y2="1"><stop offset="0" stop-color="#5fd35f"/><stop offset="1" stop-color="#1f9a2a"/></linearGradient></defs><rect x="0.5" y="0.5" width="13" height="13" rx="2" fill="url(#g)" stroke="#1b7f22" stroke-width="0.6"/><path d="M3.2 7 L5.8 9.6 L11.6 3.8" stroke="#fff" stroke-width="1.3" fill="none"/></svg></div>
<div class="t" style="left:154.5px;top:566px;letter-spacing:1.040px;">w</div>
<div class="t" style="left:258.5px;top:566px;letter-spacing:1.379px;">Frau</div>
<div class="t" style="left:309px;top:566px;letter-spacing:1.500px;">Mag.</div>
<div class="t" style="left:696px;top:566px;letter-spacing:1.171px;">Franz-Baumann-Weg 14 Top 42</div>
<div class="t" style="left:938.5px;top:566px;letter-spacing:1.986px;">6020</div>
<div class="clip" style="left:1003px;top:563px;width:57px;height:17px;"><div class="t" style="left:2.5px;top:3px;letter-spacing:1.404px;">Innsbruck</div></div>
<div class="t" style="left:1066.5px;top:566px;letter-spacing:1.125px;">Österreich</div>
<div class="t" style="left:1476.5px;top:566px;letter-spacing:1.130px;">Einheit: 0 Top:</div>
<div class="clip" style="left:20px;top:580px;width:32px;height:17px;"><div class="t" style="left:1.5px;top:3px;letter-spacing:1.986px;">2022</div></div>
<div class="a" style="left:124px;top:580px;width:16px;height:16px;background:#fff;border-radius:3px;padding:1px;"><svg width="14" height="14" viewBox="0 0 14 14"><defs><linearGradient id="g" x1="0" y1="0" x2="0" y2="1"><stop offset="0" stop-color="#5fd35f"/><stop offset="1" stop-color="#1f9a2a"/></linearGradient></defs><rect x="0.5" y="0.5" width="13" height="13" rx="2" fill="url(#g)" stroke="#1b7f22" stroke-width="0.6"/><path d="M3.2 7 L5.8 9.6 L11.6 3.8" stroke="#fff" stroke-width="1.3" fill="none"/></svg></div>
<div class="t" style="left:258.5px;top:583px;letter-spacing:1.687px;">Herr</div>
<div class="t" style="left:696px;top:583px;letter-spacing:1.091px;">Mittlere Galtschein 15 / 9</div>
<div class="t" style="left:938.5px;top:583px;letter-spacing:1.986px;">6152</div>
<div class="clip" style="left:1003px;top:580px;width:57px;height:17px;"><div class="t" style="left:2.5px;top:3px;letter-spacing:1.369px;">Trins</div></div>
<div class="t" style="left:1066.5px;top:583px;letter-spacing:1.125px;">Österreich</div>
<div class="t" style="left:1476.5px;top:583px;letter-spacing:1.130px;">Einheit: 0 Top:</div>
<div class="clip" style="left:20px;top:597px;width:32px;height:17px;"><div class="t" style="left:1.5px;top:3px;letter-spacing:1.986px;">2020</div></div>
<div class="a" style="left:124px;top:597px;width:16px;height:16px;background:#fff;border-radius:3px;padding:1px;"><svg width="14" height="14" viewBox="0 0 14 14"><defs><linearGradient id="g" x1="0" y1="0" x2="0" y2="1"><stop offset="0" stop-color="#5fd35f"/><stop offset="1" stop-color="#1f9a2a"/></linearGradient></defs><rect x="0.5" y="0.5" width="13" height="13" rx="2" fill="url(#g)" stroke="#1b7f22" stroke-width="0.6"/><path d="M3.2 7 L5.8 9.6 L11.6 3.8" stroke="#fff" stroke-width="1.3" fill="none"/></svg></div>
<div class="t" style="left:154.5px;top:600px;letter-spacing:1.358px;">männlich</div>
<div class="t" style="left:258.5px;top:600px;letter-spacing:1.687px;">Herr</div>
<div class="t" style="left:696px;top:600px;letter-spacing:1.115px;">Sterzingerstraße 32 Top 40</div>
<div class="t" style="left:938.5px;top:600px;letter-spacing:1.986px;">6330</div>
<div class="clip" style="left:1003px;top:597px;width:57px;height:17px;"><div class="t" style="left:2.5px;top:3px;letter-spacing:1.236px;">Kufstein</div></div>
<div class="t" style="left:1066.5px;top:600px;letter-spacing:1.125px;">Österreich</div>
<div class="t" style="left:1476.5px;top:600px;letter-spacing:1.130px;">Einheit: 0 Top:</div>
<div class="clip" style="left:20px;top:614px;width:32px;height:17px;"><div class="t" style="left:1.5px;top:3px;letter-spacing:1.986px;">2022</div></div>
<div class="a" style="left:124px;top:614px;width:16px;height:16px;background:#fff;border-radius:3px;padding:1px;"><svg width="14" height="14" viewBox="0 0 14 14"><defs><linearGradient id="g" x1="0" y1="0" x2="0" y2="1"><stop offset="0" stop-color="#5fd35f"/><stop offset="1" stop-color="#1f9a2a"/></linearGradient></defs><rect x="0.5" y="0.5" width="13" height="13" rx="2" fill="url(#g)" stroke="#1b7f22" stroke-width="0.6"/><path d="M3.2 7 L5.8 9.6 L11.6 3.8" stroke="#fff" stroke-width="1.3" fill="none"/></svg></div>
<div class="t" style="left:258.5px;top:617px;letter-spacing:1.687px;">Herr</div>
<div class="t" style="left:696px;top:617px;letter-spacing:1.153px;">An-der-Lan-Straße 22 Top 69</div>
<div class="t" style="left:938.5px;top:617px;letter-spacing:1.986px;">6020</div>
<div class="clip" style="left:1003px;top:614px;width:57px;height:17px;"><div class="t" style="left:2.5px;top:3px;letter-spacing:1.404px;">Innsbruck</div></div>
<div class="t" style="left:1066.5px;top:617px;letter-spacing:1.125px;">Österreich</div>
<div class="t" style="left:1476.5px;top:617px;letter-spacing:1.130px;">Einheit: 0 Top:</div>
<div class="clip" style="left:20px;top:631px;width:32px;height:17px;"><div class="t" style="left:1.5px;top:3px;letter-spacing:1.986px;">2020</div></div>
<div class="a" style="left:124px;top:631px;width:16px;height:16px;background:#fff;border-radius:3px;padding:1px;"><svg width="14" height="14" viewBox="0 0 14 14"><defs><linearGradient id="g" x1="0" y1="0" x2="0" y2="1"><stop offset="0" stop-color="#5fd35f"/><stop offset="1" stop-color="#1f9a2a"/></linearGradient></defs><rect x="0.5" y="0.5" width="13" height="13" rx="2" fill="url(#g)" stroke="#1b7f22" stroke-width="0.6"/><path d="M3.2 7 L5.8 9.6 L11.6 3.8" stroke="#fff" stroke-width="1.3" fill="none"/></svg></div>
<div class="t" style="left:258.5px;top:634px;letter-spacing:1.379px;">Frau</div>
<div class="t" style="left:696px;top:634px;letter-spacing:0.990px;">Reichenauerstraße 94a</div>
<div class="t" style="left:938.5px;top:634px;letter-spacing:1.986px;">6020</div>
<div class="clip" style="left:1003px;top:631px;width:57px;height:17px;"><div class="t" style="left:2.5px;top:3px;letter-spacing:1.404px;">Innsbruck</div></div>
<div class="t" style="left:1066.5px;top:634px;letter-spacing:1.125px;">Österreich</div>
<div class="t" style="left:1476.5px;top:634px;letter-spacing:1.130px;">Einheit: 0 Top:</div>
<div class="clip" style="left:20px;top:648px;width:32px;height:17px;"><div class="t" style="left:1.5px;top:3px;letter-spacing:1.986px;">2021</div></div>
<div class="a" style="left:124px;top:648px;width:16px;height:16px;background:#fff;border-radius:3px;padding:1px;"><svg width="14" height="14" viewBox="0 0 14 14"><defs><linearGradient id="g" x1="0" y1="0" x2="0" y2="1"><stop offset="0" stop-color="#5fd35f"/><stop offset="1" stop-color="#1f9a2a"/></linearGradient></defs><rect x="0.5" y="0.5" width="13" height="13" rx="2" fill="url(#g)" stroke="#1b7f22" stroke-width="0.6"/><path d="M3.2 7 L5.8 9.6 L11.6 3.8" stroke="#fff" stroke-width="1.3" fill="none"/></svg></div>
<div class="t" style="left:258.5px;top:651px;letter-spacing:1.687px;">Herr</div>
<div class="t" style="left:696px;top:651px;letter-spacing:1.097px;">An der Lan Straße 20 Top 78</div>
<div class="t" style="left:938.5px;top:651px;letter-spacing:1.986px;">6020</div>
<div class="clip" style="left:1003px;top:648px;width:57px;height:17px;"><div class="t" style="left:2.5px;top:3px;letter-spacing:1.404px;">Innsbruck</div></div>
<div class="t" style="left:1066.5px;top:651px;letter-spacing:1.125px;">Österreich</div>
<div class="t" style="left:1476.5px;top:651px;letter-spacing:1.130px;">Einheit: 0 Top:</div>
<div class="clip" style="left:20px;top:665px;width:32px;height:17px;"><div class="t" style="left:1.5px;top:3px;letter-spacing:1.986px;">2022</div></div>
<div class="a" style="left:124px;top:665px;width:16px;height:16px;background:#fff;border-radius:3px;padding:1px;"><svg width="14" height="14" viewBox="0 0 14 14"><defs><linearGradient id="g" x1="0" y1="0" x2="0" y2="1"><stop offset="0" stop-color="#5fd35f"/><stop offset="1" stop-color="#1f9a2a"/></linearGradient></defs><rect x="0.5" y="0.5" width="13" height="13" rx="2" fill="url(#g)" stroke="#1b7f22" stroke-width="0.6"/><path d="M3.2 7 L5.8 9.6 L11.6 3.8" stroke="#fff" stroke-width="1.3" fill="none"/></svg></div>
<div class="t" style="left:154.5px;top:668px;letter-spacing:1.040px;">w</div>
<div class="t" style="left:258.5px;top:668px;letter-spacing:1.379px;">Frau</div>
<div class="t" style="left:696px;top:668px;letter-spacing:1.085px;">Steinbockallee 37a Top 32</div>
<div class="t" style="left:938.5px;top:668px;letter-spacing:1.986px;">6063</div>
<div class="clip" style="left:1003px;top:665px;width:57px;height:17px;"><div class="t" style="left:2.5px;top:3px;letter-spacing:2.000px;">Rum</div></div>
<div class="t" style="left:1066.5px;top:668px;letter-spacing:1.125px;">Österreich</div>
<div class="t" style="left:1476.5px;top:668px;letter-spacing:1.130px;">Einheit: 0 Top:</div>
<div class="a" style="left:111px;top:303px;width:1px;height:379px;background:#c4c4c4;"></div>
<div class="a" style="left:152px;top:303px;width:1px;height:379px;background:#c4c4c4;"></div>
<div class="a" style="left:256px;top:303px;width:1px;height:379px;background:#c4c4c4;"></div>
<div class="a" style="left:307px;top:303px;width:1px;height:379px;background:#c4c4c4;"></div>
<div class="a" style="left:408px;top:303px;width:1px;height:379px;background:#c4c4c4;"></div>
<div class="a" style="left:492px;top:303px;width:1px;height:379px;background:#c4c4c4;"></div>
<div class="a" style="left:694px;top:303px;width:1px;height:379px;background:#c4c4c4;"></div>
<div class="a" style="left:936px;top:303px;width:1px;height:379px;background:#c4c4c4;"></div>
<div class="a" style="left:1002px;top:303px;width:1px;height:379px;background:#c4c4c4;"></div>
<div class="a" style="left:1063px;top:303px;width:1px;height:379px;background:#c4c4c4;"></div>
<div class="a" style="left:1155px;top:303px;width:1px;height:379px;background:#c4c4c4;"></div>
<div class="a" style="left:1236px;top:303px;width:1px;height:379px;background:#c4c4c4;"></div>
<div class="a" style="left:1373px;top:303px;width:1px;height:379px;background:#c4c4c4;"></div>
<div class="a" style="left:1474px;top:303px;width:1px;height:379px;background:#c4c4c4;"></div>
<div class="a" style="left:1575px;top:303px;width:1px;height:379px;background:#c4c4c4;"></div>
<div class="a" style="left:1929px;top:284px;width:16px;height:415px;background:#eeeeee;"></div>
<div class="a" style="left:1936px;top:310px;width:2.5px;height:26px;background:#868686;border-radius:1px;"></div>
<div class="a" style="left:8px;top:699px;width:1937px;height:16px;background:#efefef;"></div>
<div class="a" style="left:25px;top:706px;width:457px;height:2px;background:#777;"></div>
<div class="badge" style="left:74.0px;top:285.0px;">5</div>
<div class="a" style="left:4px;top:719px;width:1945px;height:1px;background:#dadada;"></div>
<div class="a" style="left:4px;top:720px;width:1945px;height:18px;background:#f1ecec;"></div>
<div class="a" style="left:4px;top:720px;width:1945px;height:1px;background:#fafafa;"></div>
<div class="a" style="left:6px;top:720px;width:1px;height:18px;background:#cfcfcf;"></div>
<div class="a" style="left:209px;top:721px;width:1px;height:16px;background:#c9c9c9;"></div>
<div class="a" style="left:412px;top:721px;width:1px;height:16px;background:#c9c9c9;"></div>
<div class="a" style="left:615px;top:721px;width:1px;height:16px;background:#c9c9c9;"></div>
<div class="a" style="left:919px;top:721px;width:1px;height:16px;background:#c9c9c9;"></div>
<div class="t" style="left:47px;top:722px;letter-spacing:1.228px;">Datensätze: 1632</div>
<div class="t" style="left:437px;top:722px;letter-spacing:1.032px;">Ausgeblendete Spalten</div>
<div class="t" style="left:633px;top:722px;letter-spacing:1.246px;">Zuletzt aktualisiert: 09.09.2025 08:29:05</div>
<div class="btn" style="left:3px;top:745px;width:125px;height:21px;"></div>
<div class="a" style="left:9px;top:748px;width:17px;height:16px;"><svg width="14" height="14" viewBox="0 0 14 14"><defs><linearGradient id="gn" x1="0" y1="0" x2="1" y2="1"><stop offset="0" stop-color="#4a8ee6"/><stop offset="1" stop-color="#2460b8"/></linearGradient></defs><rect x="0" y="0" width="14" height="14" rx="1.5" fill="url(#gn)"/><path d="M7 2.6 V11.4 M2.6 7 H11.4" stroke="#fff" stroke-width="1.3"/></svg></div>
<div class="t" style="left:28px;top:748px;letter-spacing:1.796px;">Neu</div>
<div class="btn" style="left:131px;top:745px;width:125px;height:21px;"></div>
<div class="a" style="left:137px;top:748px;width:17px;height:16px;"><svg width="14" height="14" viewBox="0 0 14 14"><defs><linearGradient id="gd" x1="0" y1="0" x2="0.3" y2="1"><stop offset="0" stop-color="#cf84f4"/><stop offset="0.5" stop-color="#b050e8"/><stop offset="1" stop-color="#8a1ec8"/></linearGradient></defs><rect x="0" y="0" width="14" height="14" rx="1.8" fill="url(#gd)"/><path d="M2.6 9.2 L7.4 4.6 L9.2 9.2 Z" fill="#fff"/><path d="M7.6 12.2 L13.2 2.4" stroke="#111" stroke-width="3.2" stroke-linecap="butt"/><path d="M8.2 10.6 L12.6 3.2" stroke="#f4f000" stroke-width="1.6"/><path d="M12.2 3.6 L13.4 1.6" stroke="#1a8a1a" stroke-width="2"/><path d="M6.9 13.2 L8.4 10.6" stroke="#111" stroke-width="1.4"/></svg></div>
<div class="t" style="left:156px;top:748px;letter-spacing:1.305px;">Detail</div>
<div class="btn" style="left:259px;top:745px;width:125px;height:21px;"></div>
<div class="a" style="left:265px;top:748px;width:17px;height:16px;"><svg width="14" height="14" viewBox="0 0 14 14"><defs><linearGradient id="gl" x1="0" y1="0" x2="1" y2="1"><stop offset="0" stop-color="#ff5050"/><stop offset="1" stop-color="#e01818"/></linearGradient></defs><rect x="0" y="0" width="14" height="14" rx="1.5" fill="url(#gl)"/><rect x="2.2" y="6.1" width="9.6" height="1.8" fill="#fff"/></svg></div>
<div class="t" style="left:284px;top:748px;letter-spacing:1.058px;">Löschen</div>
<div class="btn" style="left:387px;top:745px;width:125px;height:21px;"></div>
<div class="a" style="left:393px;top:748px;width:17px;height:16px;"><svg width="14" height="14" viewBox="0 0 14 14"><defs><linearGradient id="ga" x1="0" y1="0" x2="1" y2="1"><stop offset="0" stop-color="#ffa838"/><stop offset="1" stop-color="#d86c00"/></linearGradient></defs><rect x="0" y="0" width="14" height="14" rx="1.5" fill="url(#ga)"/><path d="M4.6 6.6 Q4.6 4.4 7.2 4.4 H8.6" stroke="#fff" stroke-width="1.5" fill="none"/><path d="M8.2 2.4 L10.4 4.4 L8.2 6.4 Z" fill="#fff"/><path d="M9.4 7.4 Q9.4 9.6 6.8 9.6 H5.4" stroke="#fff" stroke-width="1.5" fill="none"/><path d="M5.8 7.6 L3.6 9.6 L5.8 11.6 Z" fill="#fff"/></svg></div>
<div class="t" style="left:412px;top:748px;letter-spacing:1.098px;">Aktualisieren</div>
<div class="btn" style="left:515px;top:745px;width:125px;height:21px;"></div>
<div class="a" style="left:519.5px;top:748px;width:17px;height:16px;"><svg width="17" height="16" viewBox="0 0 17 16"><path d="M4.5 0.5 H13 L16 3.5 V13 H4.5 Z" fill="#eef6fd" stroke="#6c7fc4" stroke-width="1"/><path d="M13 0.5 V3.5 H16 Z" fill="#8cc8f5" stroke="#6c7fc4" stroke-width="0.8"/><rect x="6.5" y="3" width="5" height="2" fill="none" stroke="#6470b0" stroke-width="0.9"/><rect x="6.5" y="6.6" width="6" height="1" fill="#6470b0"/><path d="M0.5 6 Q0.5 4.5 2 4.5 H4.5 V15.5 H2 Q0.5 15.5 0.5 14 Z" fill="#f0c040" stroke="#b8860b" stroke-width="1"/><path d="M3 9 H15.5 L14 15.5 H1.5 Z" fill="#f6d868" stroke="#b8860b" stroke-width="1"/></svg></div>
<div class="t" style="left:538.5px;top:748px;letter-spacing:1.465px;">Dokumente</div>
<div class="btn" style="left:643px;top:745px;width:125px;height:21px;"></div>
<div class="a" style="left:650px;top:752px;width:0;height:0;border-left:5.0px solid transparent;border-right:5.0px solid transparent;border-top:5.5px solid #3a4fd0;"></div>
<div class="t" style="left:665px;top:748px;letter-spacing:1.510px;">Import/Export</div>
<div class="btn" style="left:771px;top:745px;width:125px;height:21px;"></div>
<div class="a" style="left:778px;top:752px;width:0;height:0;border-left:5.0px solid transparent;border-right:5.0px solid transparent;border-top:5.5px solid #3a4fd0;"></div>
<div class="t" style="left:793px;top:748px;letter-spacing:1.452px;">Aktion</div>
<div class="btn" style="left:899px;top:745px;width:125px;height:21px;"></div>
<div class="a" style="left:906px;top:752px;width:0;height:0;border-left:5.0px solid transparent;border-right:5.0px solid transparent;border-top:5.5px solid #3a4fd0;"></div>
<div class="t" style="left:921px;top:748px;letter-spacing:1.192px;"><u>B</u>erichte</div>
<div class="btn" style="left:1920px;top:745px;width:30px;height:21px;"></div>
<svg class="a" style="left:1926px;top:747px;" width="17" height="16" viewBox="0 0 17 16"><path d="M2.5 2 L14.5 14 M14.5 2 L2.5 14" stroke="#2a2a40" stroke-width="4.6" stroke-linecap="round"/><path d="M2.5 2 L14.5 14 M14.5 2 L2.5 14" stroke="#f0283a" stroke-width="3" stroke-linecap="round"/><path d="M3 2.5 L8 7.5 M14 2.5 L9 7.5" stroke="#ff9aa2" stroke-width="1" stroke-linecap="round"/></svg>
<div class="badge" style="left:1042.0px;top:730.0px;">6</div>
</body></html>
